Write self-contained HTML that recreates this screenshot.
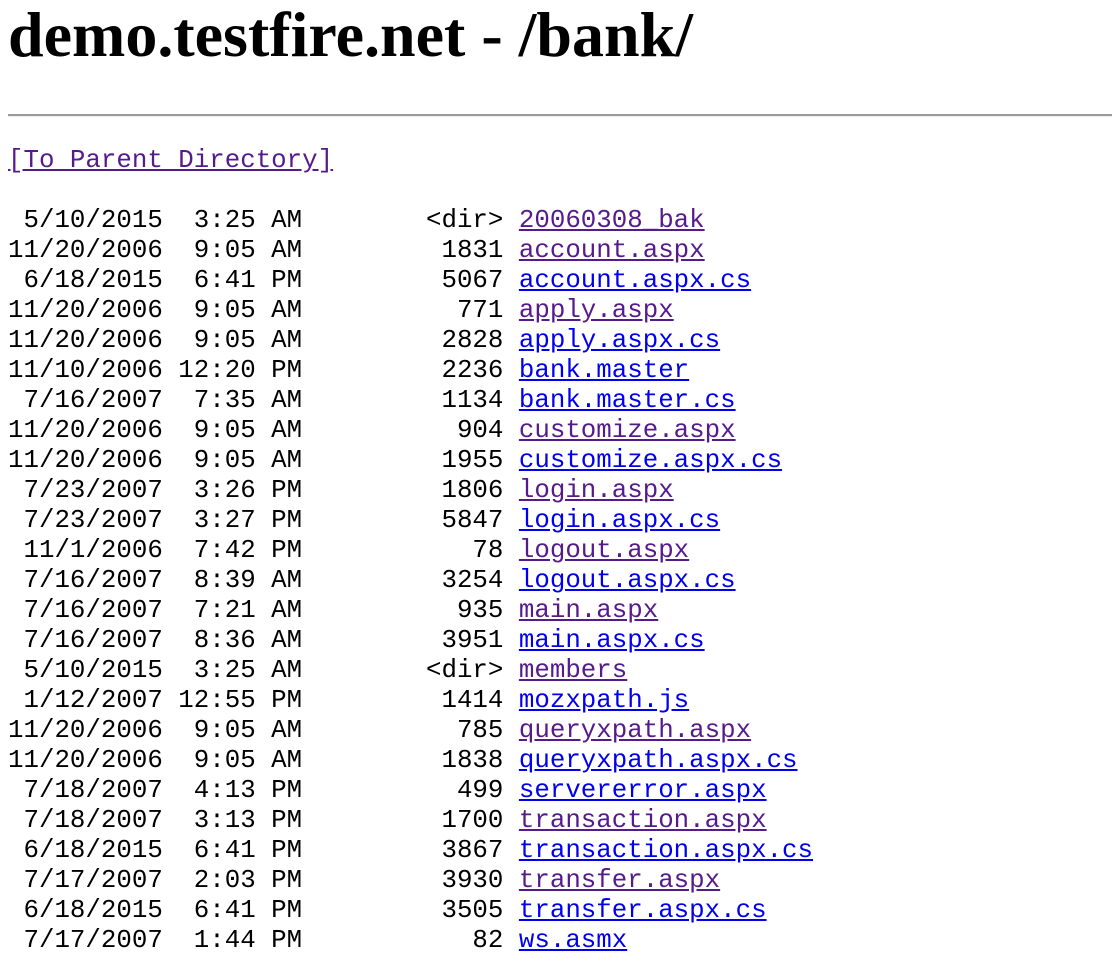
<!DOCTYPE html>
<html><head><meta charset="utf-8"><style>
html,body{margin:0;padding:0;background:#fff;width:1112px;height:976px;overflow:hidden}
h1{position:absolute;left:8px;top:3px;margin:0;font-family:"Liberation Serif",serif;font-weight:bold;font-size:64px;line-height:64px;color:#000;white-space:nowrap}
hr{position:absolute;left:8px;top:114px;width:1104px;margin:0;border:0;border-top:2px solid #9a9a9a;border-bottom:1px solid #eee;height:0}
pre{position:absolute;left:8px;top:146px;margin:0;font-family:"Liberation Mono",monospace;font-size:25.8px;line-height:30px;color:#000}
a{color:#0000ee;text-decoration:underline}
a.v{color:#551a8b}
</style></head><body>
<h1>demo.testfire.net - /bank/</h1>
<hr>
<pre><a class="v" href="#">[To Parent Directory]</a>

 5/10/2015  3:25 AM        &lt;dir&gt; <a class="v" href="#">20060308_bak</a>
11/20/2006  9:05 AM         1831 <a class="v" href="#">account.aspx</a>
 6/18/2015  6:41 PM         5067 <a href="#">account.aspx.cs</a>
11/20/2006  9:05 AM          771 <a class="v" href="#">apply.aspx</a>
11/20/2006  9:05 AM         2828 <a href="#">apply.aspx.cs</a>
11/10/2006 12:20 PM         2236 <a href="#">bank.master</a>
 7/16/2007  7:35 AM         1134 <a href="#">bank.master.cs</a>
11/20/2006  9:05 AM          904 <a class="v" href="#">customize.aspx</a>
11/20/2006  9:05 AM         1955 <a href="#">customize.aspx.cs</a>
 7/23/2007  3:26 PM         1806 <a class="v" href="#">login.aspx</a>
 7/23/2007  3:27 PM         5847 <a href="#">login.aspx.cs</a>
 11/1/2006  7:42 PM           78 <a class="v" href="#">logout.aspx</a>
 7/16/2007  8:39 AM         3254 <a href="#">logout.aspx.cs</a>
 7/16/2007  7:21 AM          935 <a class="v" href="#">main.aspx</a>
 7/16/2007  8:36 AM         3951 <a href="#">main.aspx.cs</a>
 5/10/2015  3:25 AM        &lt;dir&gt; <a class="v" href="#">members</a>
 1/12/2007 12:55 PM         1414 <a href="#">mozxpath.js</a>
11/20/2006  9:05 AM          785 <a class="v" href="#">queryxpath.aspx</a>
11/20/2006  9:05 AM         1838 <a href="#">queryxpath.aspx.cs</a>
 7/18/2007  4:13 PM          499 <a href="#">servererror.aspx</a>
 7/18/2007  3:13 PM         1700 <a class="v" href="#">transaction.aspx</a>
 6/18/2015  6:41 PM         3867 <a href="#">transaction.aspx.cs</a>
 7/17/2007  2:03 PM         3930 <a class="v" href="#">transfer.aspx</a>
 6/18/2015  6:41 PM         3505 <a href="#">transfer.aspx.cs</a>
 7/17/2007  1:44 PM           82 <a href="#">ws.asmx</a>
</pre>
</body></html>
